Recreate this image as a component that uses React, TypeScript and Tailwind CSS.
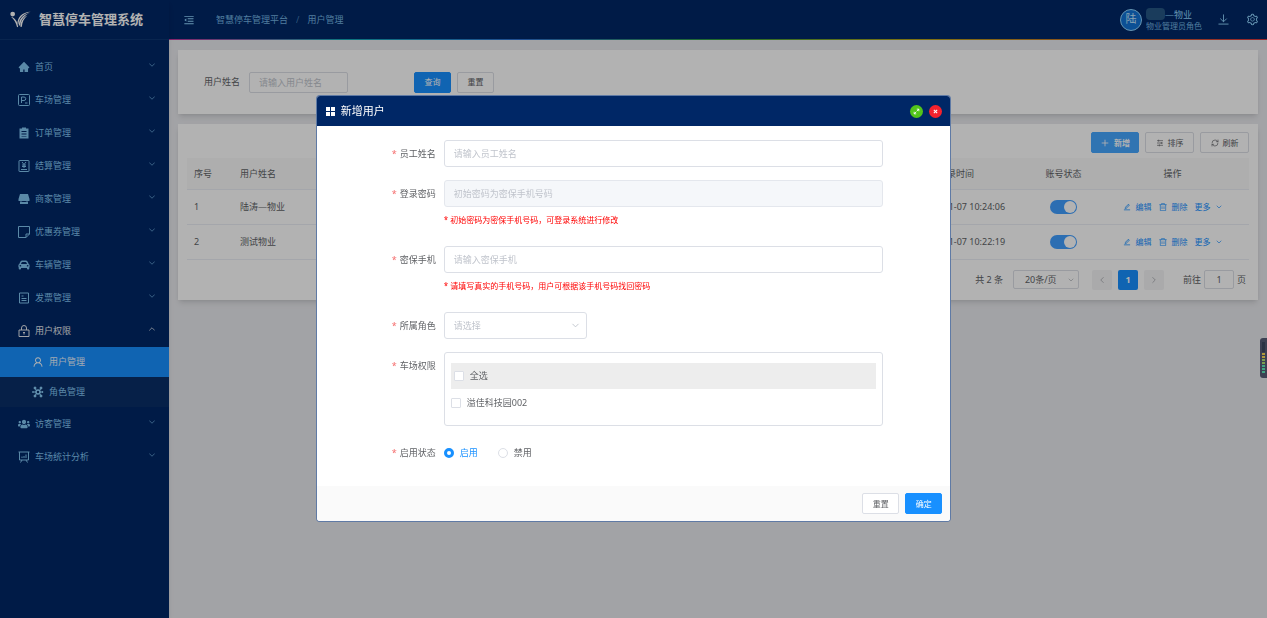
import type { ComponentType, ReactNode, SVGProps } from 'react';
import clsx from 'clsx';
import {
  AiFillHome,
  AiOutlineEdit,
  AiOutlineMenuFold,
  AiOutlineSetting,
  AiOutlineUser,
} from 'react-icons/ai';
import { FaCarAlt, FaUsers } from 'react-icons/fa';
import {
  LuChevronDown,
  LuChevronLeft,
  LuChevronRight,
  LuChevronUp,
  LuPlus,
  LuRefreshCw,
} from 'react-icons/lu';

type IconType = ComponentType<{ className?: string }>;
type SvgProps = SVGProps<SVGSVGElement>;

const Stroke = ({ children, ...props }: SvgProps) => (
  <svg viewBox="0 0 24 24" fill="none" stroke="currentColor" strokeWidth={2} {...props}>
    {children}
  </svg>
);

const ParkingIcon: IconType = (props) => (
  <Stroke {...props}>
    <rect x="1" y="1" width="22" height="22" rx="2" />
    <path d="M7 18V6h5a3 3 0 0 1 0 7H7M14 18h5" />
  </Stroke>
);

const ClipboardIcon: IconType = (props) => (
  <svg viewBox="0 0 24 24" fill="currentColor" {...props}>
    <path
      fillRule="evenodd"
      d="M8 1h8v2h5v20H3V3h5V1Zm-1 7v2h10V8H7Zm0 5v2h10v-2H7Zm0 5v1h10v-1H7Z"
    />
  </svg>
);

const BillIcon: IconType = (props) => (
  <Stroke {...props}>
    <rect x="2" y="1" width="20" height="22" rx="1" />
    <path d="m8 4 4 5 4-5M12 9v7M8 10h8M8 13h8M6 19h12" />
  </Stroke>
);

const ShopIcon: IconType = (props) => (
  <svg viewBox="0 0 24 24" fill="currentColor" {...props}>
    <path d="M4 2h16l3 10v4H1v-4L4 2ZM4 17h3l2 1h6l2-1h3v5H4v-5Z" />
  </svg>
);

const CouponIcon: IconType = (props) => (
  <Stroke {...props}>
    <path d="M1 1h22v15l-7 7H1V1ZM16 23v-7h7" />
  </Stroke>
);

const InvoiceIcon: IconType = (props) => (
  <Stroke {...props}>
    <path d="M3 2h18v20H3V2ZM7 8h4M7 13h10M7 17h10" />
  </Stroke>
);

const LockIcon: IconType = (props) => (
  <Stroke {...props}>
    <path d="M2 10h20v13H2V10ZM7 10V6a5 5 0 0 1 10 0v4M12 14v5M10 15h4" />
  </Stroke>
);

const RoleIcon: IconType = (props) => (
  <Stroke {...props}>
    <circle cx="12" cy="12" r="4" strokeWidth={3} />
    <path d="m9 9-3-4M15 9l3-4M16 12h5M15 15l3 4M9 15l-3 4M8 12H3" />
    <g fill="currentColor">
      <circle cx="6" cy="4" r="2" />
      <circle cx="18" cy="4" r="2" />
      <circle cx="21" cy="12" r="1" />
      <circle cx="18" cy="20" r="2" />
      <circle cx="6" cy="20" r="2" />
      <circle cx="2" cy="12" r="1" />
    </g>
  </Stroke>
);

const ChartBoardIcon: IconType = (props) => (
  <Stroke {...props}>
    <path d="M1 2h22M3 2v16h18V2M8 18l-3 5M16 18l3 5M8 14v-3M12 14v-4M16 14V7" />
  </Stroke>
);

const SortIcon: IconType = (props) => (
  <Stroke {...props}>
    <path d="M3 5h18M3 12h18M3 19h18M8 2v6M16 9v6M10 16v6" />
  </Stroke>
);

const TrashIcon: IconType = (props) => (
  <Stroke {...props}>
    <path d="M1 5h22M8 5V1h8v4M4 5v18h16V5M9 10v8M15 10v8" />
  </Stroke>
);

const DownloadIcon: IconType = (props) => (
  <Stroke {...props}>
    <path d="M12 1v16M5 10l7 7 7-7M1 22h22" />
  </Stroke>
);

const ExpandIcon: IconType = (props) => (
  <Stroke {...props} strokeWidth={3}>
    <path d="M13 4h7v7M20 4l-7 7M11 20H4v-7M4 20l7-7" />
  </Stroke>
);

const CloseIcon: IconType = (props) => (
  <Stroke {...props} strokeWidth={5}>
    <path d="m4 4 16 16M20 4 4 20" />
  </Stroke>
);

const GridIcon: IconType = (props) => (
  <svg viewBox="0 0 18 18" fill="currentColor" {...props}>
    <path d="M0 0h8v8H0zM10 0h8v8h-8zM0 10h8v8H0zM10 10h8v8h-8z" />
  </svg>
);

const Logo = () => (
  <svg viewBox="0 0 60 50" className="h-[17px] w-[21px] shrink-0" fill="#fff">
    <circle cx="7" cy="9" r="7" />
    <path d="M2 17C14 20 21 31 23 46l-3 2C17 35 12 25 2 17Z" />
    <path d="M21 37C21 19 34 3 60 2 39 7 26 19 24 38l-3-1Z" />
    <path d="M25 43C25 25 35 11 58 5 41 13 31 25 29 43h-4Z" />
    <path d="M30 47C29 34 35 21 50 13 40 22 35 33 34 46l-4 1Z" />
  </svg>
);

type MenuItem = {
  label: string;
  icon: IconType;
  children?: { label: string; icon: IconType; active?: boolean }[];
};

const menu: MenuItem[] = [
  { label: '首页', icon: AiFillHome },
  { label: '车场管理', icon: ParkingIcon },
  { label: '订单管理', icon: ClipboardIcon },
  { label: '结算管理', icon: BillIcon },
  { label: '商家管理', icon: ShopIcon },
  { label: '优惠券管理', icon: CouponIcon },
  { label: '车辆管理', icon: FaCarAlt },
  { label: '发票管理', icon: InvoiceIcon },
  {
    label: '用户权限',
    icon: LockIcon,
    children: [
      { label: '用户管理', icon: AiOutlineUser, active: true },
      { label: '角色管理', icon: RoleIcon },
    ],
  },
  { label: '访客管理', icon: FaUsers },
  { label: '车场统计分析', icon: ChartBoardIcon },
];

const Sidebar = () => (
  <aside className="z-10 w-[169px] shrink-0 bg-[#002766] text-[#91d5ff] shadow-md">
    <div className="flex h-10 items-center gap-2 border-b border-[#0d3672] pl-[10px] text-white">
      <Logo />
      <h1 className="text-[13px] font-bold whitespace-nowrap">智慧停车管理系统</h1>
    </div>
    <nav className="pt-[10px]">
      <ul>
        {menu.map(({ label, icon: Icon, children }) => (
          <li key={label}>
            <a
              href="#"
              className={clsx(
                'flex h-[33px] items-center gap-[5px] pr-3 pl-[18px]',
                children && 'text-white'
              )}
            >
              <Icon className="size-3 opacity-90" />
              <span className="flex-1 opacity-90">{label}</span>
              {children ? (
                <LuChevronUp className="mb-1 size-[10px] opacity-80" />
              ) : (
                <LuChevronDown className="mb-1 size-[10px] opacity-70" />
              )}
            </a>
            {children && (
              <ul className="bg-[#0a2f67]">
                {children.map(({ label, icon: SubIcon, active }) => (
                  <li key={label}>
                    <a
                      href="#"
                      className={clsx(
                        'flex h-[30px] items-center gap-[5px] pl-8',
                        active && 'bg-[#1890ff] text-white'
                      )}
                    >
                      <SubIcon className="size-3" />
                      <span className="opacity-90">{label}</span>
                    </a>
                  </li>
                ))}
              </ul>
            )}
          </li>
        ))}
      </ul>
    </nav>
  </aside>
);

const Header = () => (
  <header className="bg-[#002766] text-[#91d5ff]">
    <div className="flex h-[39px] items-center pr-2 pl-[14px]">
      <AiOutlineMenuFold className="size-3" />
      <ol className="ml-[21px] flex gap-2 opacity-80">
        <li>智慧停车管理平台</li>
        <li className="opacity-60">/</li>
        <li>用户管理</li>
      </ol>
      <div className="ml-auto flex items-center gap-1">
        <span className="flex size-[22px] items-center justify-center rounded-full border border-[#91d5ff] bg-[#1273d6] text-[11px] text-[#c4e8ff]">
          陆
        </span>
        <div className="flex flex-col text-[9px] leading-[11px]">
          <span className="flex items-center">
            <span className="h-3 w-[19px] rounded-sm bg-[#265785]" />
            —物业
          </span>
          <span className="text-[8px] opacity-80">物业管理员角色</span>
        </div>
      </div>
      <DownloadIcon className="ml-4 size-[11px]" />
      <AiOutlineSetting className="ml-[17px] size-[13px]" />
    </div>
    <div className="h-px bg-[linear-gradient(to_right,#c4349b,#13a8b5_16%,#2f6fd0_32%,#2f9a3c_50%,#b5a41a_68%,#c9702a_85%,#d9363e)]" />
  </header>
);

const Button = ({
  children,
  kind = 'default',
  className,
}: {
  children: ReactNode;
  kind?: 'default' | 'primary' | 'light';
  className?: string;
}) => (
  <button
    type="button"
    className={clsx(
      'flex h-[21px] items-center justify-center gap-1 rounded-[2px] border text-[8px] whitespace-nowrap',
      kind === 'default' && 'border-[#dcdfe6] bg-white text-[#606266]',
      kind === 'primary' && 'border-[#1890ff] bg-[#1890ff] text-white',
      kind === 'light' && 'border-[#46a6ff] bg-[#46a6ff] text-white',
      className
    )}
  >
    {children}
  </button>
);

const SearchCard = () => (
  <form className="flex h-16 items-center bg-white pl-[26px] shadow-md">
    <label htmlFor="search-name">用户姓名</label>
    <input
      id="search-name"
      placeholder="请输入用户姓名"
      className="ml-[9px] h-[21px] w-[99px] rounded-[2px] border border-[#dcdfe6] px-[9px] placeholder:text-[#c0c4cc]"
    />
    <Button kind="primary" className="ml-[66px] w-[37px]">
      查询
    </Button>
    <Button className="ml-[6px] w-[37px]">重置</Button>
  </form>
);

const users = [
  { id: 1, name: '陆涛—物业', lastLogin: '2023-11-07 10:24:06' },
  { id: 2, name: '测试物业', lastLogin: '2023-11-07 10:22:19' },
];

const UserTable = () => (
  <table className="w-full table-fixed">
    <colgroup>
      <col className="w-[46px]" />
      <col />
      <col className="w-[118px]" />
      <col className="w-[65px]" />
      <col className="w-[153px]" />
    </colgroup>
    <thead className="bg-[#fafafa]">
      <tr className="h-[31px] border-b border-[#ebeef5] text-left">
        <th className="pl-[7px] font-normal">序号</th>
        <th className="pl-[7px] font-normal">用户姓名</th>
        <th className="pl-[7px] font-normal">最后登录时间</th>
        <th className="text-center font-normal">账号状态</th>
        <th className="text-center font-normal">操作</th>
      </tr>
    </thead>
    <tbody>
      {users.map(({ id, name, lastLogin }) => (
        <tr key={id} className="h-[35px] border-b border-[#ebeef5]">
          <td className="pl-[7px]">{id}</td>
          <td className="pl-[7px]">{name}</td>
          <td className="pl-[7px]">{lastLogin}</td>
          <td>
            <label className="mx-auto flex h-[14px] w-[27px] items-center justify-end rounded-full bg-[#409eff] p-px">
              <input type="checkbox" defaultChecked aria-label={name} className="sr-only" />
              <span className="size-3 rounded-full bg-white" />
            </label>
          </td>
          <td>
            <div className="flex items-center justify-center gap-[7px] text-[8px] text-[#1890ff]">
              <button type="button" className="flex items-center gap-[5px]">
                <AiOutlineEdit className="size-2" />
                编辑
              </button>
              <button type="button" className="flex items-center gap-[5px]">
                <TrashIcon className="size-2" />
                删除
              </button>
              <button type="button" className="flex items-center gap-1">
                更多
                <LuChevronDown className="size-2" />
              </button>
            </div>
          </td>
        </tr>
      ))}
    </tbody>
  </table>
);

const Pagination = () => (
  <div className="flex h-10 items-center justify-end pr-[3px] whitespace-nowrap">
    <span>共 2 条</span>
    <div className="relative ml-[10px]">
      <select
        aria-label="每页条数"
        className="h-[19px] w-[66px] appearance-none rounded-[2px] border border-[#dcdfe6] pl-[11px]"
      >
        <option>20条/页</option>
      </select>
      <LuChevronDown className="absolute top-[6px] right-1 size-2 text-[#a8abb2]" />
    </div>
    <button
      type="button"
      aria-label="上一页"
      className="ml-[13px] flex size-5 items-center justify-center rounded-[2px] bg-[#f4f4f5] text-[#a8abb2]"
    >
      <LuChevronLeft className="size-[10px]" />
    </button>
    <button type="button" className="ml-[6px] size-5 rounded-[2px] bg-[#1890ff] font-bold text-white">
      1
    </button>
    <button
      type="button"
      aria-label="下一页"
      className="ml-[6px] flex size-5 items-center justify-center rounded-[2px] bg-[#f4f4f5] text-[#a8abb2]"
    >
      <LuChevronRight className="size-[10px]" />
    </button>
    <label className="ml-[19px] flex items-center gap-[3px]">
      前往
      <input
        defaultValue="1"
        className="h-[19px] w-[30px] rounded-[2px] border border-[#dcdfe6] text-center"
      />
      页
    </label>
  </div>
);

const UserCard = () => (
  <section className="bg-white px-[9px] pt-2 shadow-md">
    <div className="mb-[5px] flex justify-end gap-[6px]">
      <Button kind="light" className="w-12 font-bold">
        <LuPlus className="size-[10px]" />
        新增
      </Button>
      <Button className="w-[49px]">
        <SortIcon className="size-2" />
        排序
      </Button>
      <Button className="w-[49px]">
        <LuRefreshCw className="size-2" />
        刷新
      </Button>
    </div>
    <UserTable />
    <Pagination />
  </section>
);

const inputStyle =
  'h-[27px] w-full rounded-[3px] border border-[#dcdfe6] px-[9px] placeholder:text-[#c0c4cc] disabled:border-[#e4e7ed] disabled:bg-[#f5f7fa]';

const Field = ({
  label,
  htmlFor,
  hint,
  children,
}: {
  label: string;
  htmlFor?: string;
  hint?: string;
  children: ReactNode;
}) => (
  <div className="flex gap-2">
    <label htmlFor={htmlFor} className="w-[119px] shrink-0 text-right leading-[27px]">
      <span className="mr-[3px] text-[#f56c6c]">*</span>
      {label}
    </label>
    <div className="min-w-0 flex-1">
      {children}
      {hint && <p className="mb-[14px] text-[8px] leading-[25px] text-[#ff0000]">* {hint}</p>}
    </div>
  </div>
);

const checkboxStyle = 'size-[10px] appearance-none rounded-[1px] border border-[#dcdfe6] bg-white';

const UserDialog = () => (
  <div
    role="dialog"
    aria-labelledby="dialog-title"
    className="mx-auto mt-24 w-1/2 overflow-hidden rounded-[3px] bg-white ring-1 ring-[#5f7aa5]"
  >
    <header className="flex h-[30px] items-center bg-[#002766] pr-2 pl-[9px] text-white">
      <GridIcon className="size-[9px]" />
      <h2 id="dialog-title" className="ml-[6px] text-[11px]">
        新增用户
      </h2>
      <button
        type="button"
        aria-label="全屏"
        className="mr-[6px] ml-auto flex size-[13px] items-center justify-center rounded-full bg-[#52c41a]"
      >
        <ExpandIcon className="size-[7px]" />
      </button>
      <button
        type="button"
        aria-label="关闭"
        className="flex size-[13px] items-center justify-center rounded-full bg-[#f5222d]"
      >
        <CloseIcon className="size-[5px]" />
      </button>
    </header>
    <form className="flex flex-col gap-[13px] pt-[14px] pr-[67px] pb-5">
      <Field label="员工姓名" htmlFor="staff-name">
        <input id="staff-name" placeholder="请输入员工姓名" className={inputStyle} />
      </Field>
      <div className="flex flex-col">
        <Field
          label="登录密码"
          htmlFor="password"
          hint="初始密码为密保手机号码，可登录系统进行修改"
        >
          <input id="password" disabled placeholder="初始密码为密保手机号码" className={inputStyle} />
        </Field>
        <Field
          label="密保手机"
          htmlFor="phone"
          hint="请填写真实的手机号码，用户可根据该手机号码找回密码"
        >
          <input id="phone" placeholder="请输入密保手机" className={inputStyle} />
        </Field>
        <Field label="所属角色" htmlFor="role">
          <div className="relative w-[143px]">
            <select id="role" className={clsx(inputStyle, 'appearance-none text-[#c0c4cc]')}>
              <option>请选择</option>
            </select>
            <LuChevronDown className="absolute top-2 right-[6px] size-[11px] text-[#c0c4cc]" />
          </div>
        </Field>
      </div>
      <Field label="车场权限">
        <div className="h-[74px] rounded-[3px] border border-[#dcdfe6] px-[6px] pt-[10px]">
          <label className="flex h-[26px] items-center gap-[6px] bg-[#ededed] px-[3px]">
            <input type="checkbox" className={checkboxStyle} />
            全选
          </label>
          <label className="flex h-[27px] items-center gap-[6px]">
            <input type="checkbox" className={checkboxStyle} />
            溢佳科技园002
          </label>
        </div>
      </Field>
      <Field label="启用状态">
        <div className="flex h-[27px] items-center gap-5">
          <label className="flex items-center gap-[6px] text-[#1890ff]">
            <input
              type="radio"
              name="status"
              defaultChecked
              className="size-[10px] appearance-none rounded-full border-[3px] border-[#1890ff] bg-white"
            />
            启用
          </label>
          <label className="flex items-center gap-[6px]">
            <input
              type="radio"
              name="status"
              className="size-[10px] appearance-none rounded-full border border-[#dcdfe6] bg-white"
            />
            禁用
          </label>
        </div>
      </Field>
    </form>
    <footer className="flex h-[35px] items-center justify-end gap-[6px] bg-[#fafafa] pr-2">
      <Button className="w-[37px]">重置</Button>
      <Button kind="primary" className="w-[37px]">
        确定
      </Button>
    </footer>
  </div>
);

// small meter docked to the right edge of the window
const Meter = () => (
  <div className="fixed top-[338px] right-0 w-[7px] rounded-l-[3px] bg-[#3d4153] px-[2px] py-1">
    <svg viewBox="0 0 3 32" className="h-8 w-[3px]">
      <path d="M0 0h3v10H0z" fill="#2c3344" />
      <path d="M0 11h3v2H0zM0 14h3v2H0z" fill="#b09a3c" />
      <path d="M0 17h3v2H0zM0 20h3v2H0z" fill="#7ba050" />
      <path d="M0 23h3v2H0zM0 26h3v2H0zM0 29h3v2H0z" fill="#41a583" />
    </svg>
  </div>
);

export default function App() {
  return (
    <div className="flex min-h-screen bg-[#e9eaee] font-['Noto_Sans','Noto_Sans_CJK_SC',sans-serif] text-[9px] text-[#606266]">
      <Sidebar />
      <div className="min-w-0 flex-1">
        <Header />
        <main className="flex flex-col gap-[10px] px-[9px] py-[10px]">
          <SearchCard />
          <UserCard />
        </main>
      </div>
      <div className="fixed inset-0 z-20 overflow-y-auto bg-black/30">
        <UserDialog />
        <Meter />
      </div>
    </div>
  );
}
